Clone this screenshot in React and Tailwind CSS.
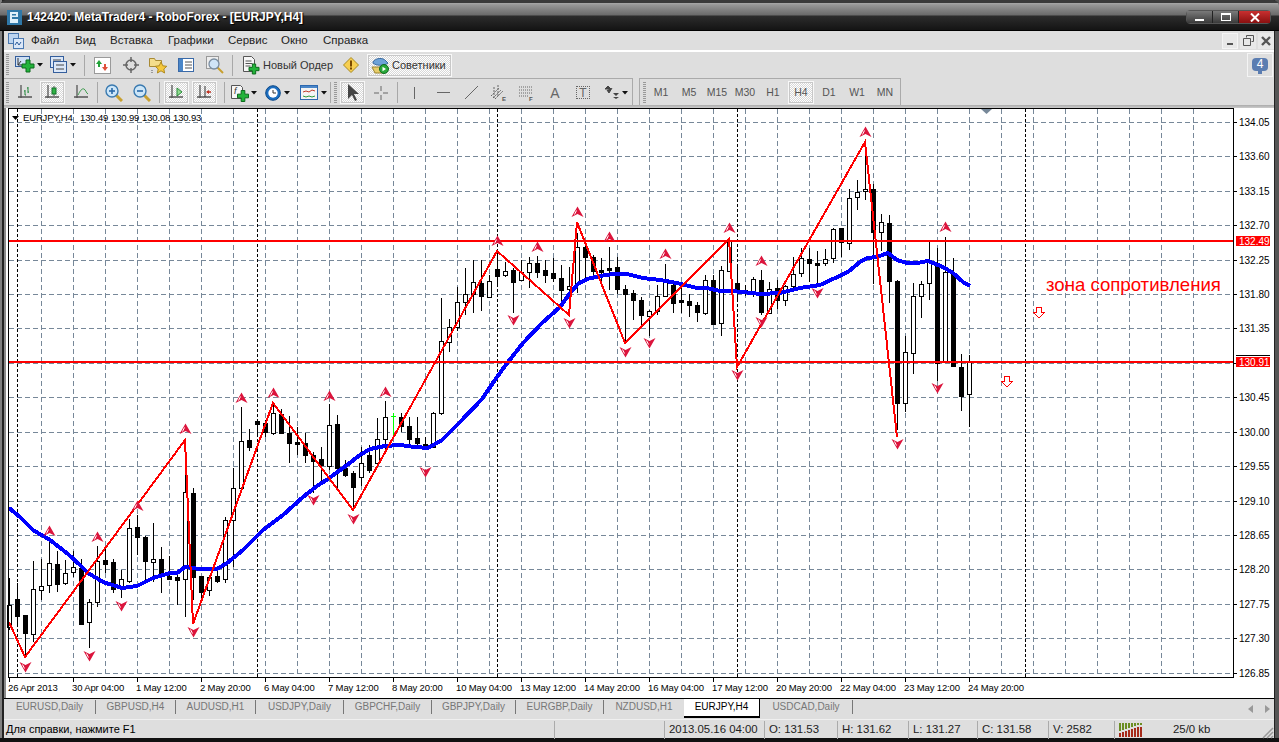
import React from "react";

// [high, bodyTop, bodyBottom, low, black]
const candles = [
  [578,605,627,630,0],[583,599,616,625,1],[615,615,633,657,1],[561,589,634,642,0],[559,586,590,600,0],[540,563,585,593,0],
  [551,564,584,592,1],[560,573,583,585,0],[551,567,572,577,0],[559,568,624,625,1],[599,602,622,648,0],[546,561,602,607,0],
  [548,560,564,573,1],[559,562,589,593,1],[570,579,588,598,0],[519,528,581,583,0],[515,527,537,555,1],[536,537,561,580,1],
  [523,559,562,582,0],[547,559,575,593,1],[556,576,579,580,1],[573,577,580,605,1],[463,492,579,617,0],[488,493,577,600,1],
  [576,576,592,600,1],[575,577,590,596,0],[570,576,581,583,1],[517,520,579,583,0],[468,488,520,567,0],[407,441,488,490,0],
  [429,440,447,451,1],[420,421,424,437,1],[420,423,432,437,1],[403,413,433,435,0],[409,414,433,434,1],[416,433,443,463,1],
  [427,442,444,455,1],[433,443,455,463,1],[452,455,461,493,1],[447,459,465,483,1],[404,425,466,470,0],[415,424,468,488,1],
  [460,468,475,477,1],[471,473,487,510,1],[447,463,477,486,0],[445,455,470,473,1],[418,439,463,466,0],[401,417,439,450,0],
  [413,416,416,437,2],[413,417,426,432,1],[417,426,439,447,1],[417,438,443,448,1],[437,444,447,450,1],[412,413,447,448,0],
  [298,341,413,415,0],[319,327,342,352,0],[287,302,327,331,0],[268,294,302,315,0],[260,282,294,313,0],[260,283,296,311,1],
  [275,281,297,298,0],[250,269,276,286,1],[262,271,275,277,0],[268,270,282,313,1],[260,272,280,281,0],[257,263,272,288,0],
  [256,263,272,278,1],[260,270,275,283,1],[258,273,278,282,1],[265,278,290,305,1],[267,286,289,315,0],[233,247,283,293,0],
  [240,247,257,278,1],[255,257,271,275,1],[258,270,272,283,1],[247,268,270,290,1],[257,267,289,294,1],[285,289,294,342,1],
  [290,293,300,320,1],[297,300,315,325,1],[310,311,316,336,0],[285,296,311,315,0],[264,282,296,297,0],[280,285,303,313,1],
  [287,300,302,313,1],[294,301,305,317,1],[302,305,312,322,1],[275,280,313,315,0],[275,280,324,324,1],[266,270,323,336,0],
  [239,240,271,272,0],[265,283,290,300,1],[285,290,293,296,1],[277,279,292,297,0],[270,280,312,315,1],[282,289,313,314,0],
  [280,288,300,309,1],[285,286,300,306,0],[257,274,286,288,0],[248,258,273,277,0],[248,259,263,282,1],[251,263,265,285,1],
  [249,259,263,266,0],[228,229,258,263,0],[228,228,242,257,1],[189,198,243,250,0],[180,192,197,210,0],[142,189,191,200,0],
  [184,189,232,284,1],[214,222,232,251,0],[215,223,281,303,1],[280,281,403,430,1],[336,352,403,412,0],[283,296,353,374,0],
  [281,284,296,318,0],[242,262,283,300,0],[248,263,363,381,1],[237,272,362,363,0],[258,273,366,367,1],[354,367,396,411,1],
  [355,362,394,427,0],
];

const maPoints = "9,508 20,517 33,530 50,540 68,554 80,565 88,573 103,582 122,588 137,586 153,578 170,573 177,573 185,567 200,569 217,569 227,563 243,550 263,530 283,515 303,497 317,486 328,479 347,465 360,455 370,449 385,446 400,445 415,447 428,448 442,440 460,422 482,399 497,377 508,362 523,343 542,323 560,307 570,293 578,284 587,279 600,276 613,274 627,274 643,278 660,280 677,283 697,288 707,288 720,291 730,291 743,292 760,294 780,293 800,288 820,285 833,279 848,272 860,262 867,258 877,257 888,253 897,260 907,263 917,263 928,261 943,267 953,273 963,282 970,286";
const zigzag = "9,622 25,657 185,440 193,624 273,403 353,510 497,251 569,315 577,222 625,343 729,239 737,367 865,142 897,437";

const upMarks = [[49,531],[97,537],[137,506],[185,429],[241,398],[273,393],[329,396],[385,392],[497,241],[537,247],[577,212],[609,237],[665,254],[729,228],[761,261],[865,132],[945,227]];
const downMarks = [[25,667],[89,656],[121,606],[193,632],[313,500],[353,519],[425,472],[513,320],[569,323],[625,352],[649,343],[737,375],[761,322],[817,293],[897,444],[937,388]];

const gridY = [122,156,191,225,260,294,328,363,397,432,466,501,535,569,604,638,673];
const gridX = Array.from({ length: 37 }, (_, i) => 41 + 32 * i);
const prices = ["134.05","133.60","133.15","132.70","132.25","131.80","131.35","","130.45","130.00","129.55","129.10","128.65","128.20","127.75","127.30","126.85"];
const times = ["26 Apr 2013","30 Apr 04:00","1 May 12:00","2 May 20:00","6 May 04:00","7 May 12:00","8 May 20:00","10 May 04:00","13 May 12:00","14 May 20:00","16 May 04:00","17 May 12:00","20 May 20:00","22 May 04:00","23 May 12:00","24 May 20:00"];

const Chart = () => (
  <svg viewBox="4 108 1270 590" width="1270" height="590" className="block shrink-0 bg-white">
    <rect x="4" y="108" width="2" height="590" fill="#8a8a8a" />
    <g stroke="#778899" strokeDasharray="5 3" shapeRendering="crispEdges">
      {gridX.map((x) => <line key={x} x1={x + 0.5} y1="109" x2={x + 0.5} y2="677" />)}
      {gridY.map((y) => <line key={y} x1="9" y1={y + 0.5} x2="1233" y2={y + 0.5} />)}
    </g>
    <g stroke="#000" strokeDasharray="3 2" shapeRendering="crispEdges">
      {[17, 257, 497, 737, 1025].map((x) => <line key={x} x1={x + 0.5} y1="109" x2={x + 0.5} y2="677" />)}
    </g>
    <g shapeRendering="crispEdges">
      {candles.map((c, i) => {
        const x = 9 + 8 * i;
        if (c[4] === 2) {
          return (
            <g key={i} stroke="#00ff00">
              <line x1={x + 0.5} y1={c[0]} x2={x + 0.5} y2={c[3]} />
              <line x1={x - 2} y1={c[1] + 0.5} x2={x + 3} y2={c[1] + 0.5} />
            </g>
          );
        }
        return (
          <g key={i} stroke="#000">
            <line x1={x + 0.5} y1={c[0]} x2={x + 0.5} y2={c[3]} />
            <rect x={x - 1.5} y={c[1] + 0.5} width="4" height={c[2] - c[1]} fill={c[4] ? "#000" : "#fff"} />
          </g>
        );
      })}
    </g>
    <polyline points={maPoints} fill="none" stroke="#0000ff" strokeWidth="4" shapeRendering="crispEdges" />
    <polyline points={zigzag} fill="none" stroke="#ff0000" strokeWidth="2" shapeRendering="crispEdges" />
    <g fill="#ff0000" shapeRendering="crispEdges">
      <rect x="9" y="240" width="1224" height="2" />
      <rect x="9" y="361" width="1224" height="2" />
    </g>
    <g>
      {upMarks.map(([x, y]) => (
        <g key={`u${x}`}>
          <path d={`M${x + 0.5} ${y - 5.5}L${x + 6.5} ${y + 5}L${x + 0.5} ${y + 2}L${x - 5.5} ${y + 5}Z`} fill="#dc143c" />
          <path d={`M${x - 0.5} ${y - 1.5}L${x - 2.5} ${y + 2.5}`} stroke="#fff" strokeWidth="1" />
        </g>
      ))}
      {downMarks.map(([x, y]) => (
        <g key={`d${x}`}>
          <path d={`M${x + 0.5} ${y + 5.5}L${x + 6.5} ${y - 5}L${x + 0.5} ${y - 2}L${x - 5.5} ${y - 5}Z`} fill="#dc143c" />
          <path d={`M${x - 0.5} ${y + 1.5}L${x - 2.5} ${y - 2.5}`} stroke="#fff" strokeWidth="1" />
        </g>
      ))}
    </g>
    <g fill="#fff" stroke="#ff0000" shapeRendering="crispEdges">
      <path d="M1004.5 376.5h5v5h3l-5.5 5.5l-5.5 -5.5h3z" />
      <path d="M1036.5 307.5h5v5h3l-5.5 5.5l-5.5 -5.5h3z" />
    </g>
    <polygon points="981,109 992,109 986.5,114" fill="#778899" />
    <rect x="8" y="108" width="1225" height="569" fill="none" stroke="#000" shapeRendering="crispEdges" transform="translate(0.5 0.5)" />
    <g stroke="#000" shapeRendering="crispEdges">
      {gridY.map((y) => <line key={y} x1="1234" y1={y + 0.5} x2="1237" y2={y + 0.5} />)}
      {times.map((t, i) => <line key={t} x1={9.5 + 64 * i} y1="678" x2={9.5 + 64 * i} y2="682" />)}
    </g>
    <g fontSize="10" fill="#000">
      {prices.map((p, i) => p && <text key={p} x="1239" y={gridY[i] + 3.5}>{p}</text>)}
      <polygon points="12,116 19,116 15.5,120" fill="#000" />
    </g>
    <g fontSize="9.5" letterSpacing="-0.15" fill="#000">
      <text x="23" y="121">EURJPY,H4</text>
      <text x="80" y="121">130.49</text>
      <text x="111" y="121">130.99</text>
      <text x="142" y="121">130.08</text>
      <text x="173" y="121">130.93</text>
      {times.map((t, i) => <text key={t} x={8 + 64 * i} y="690.5">{t}</text>)}
    </g>
    <rect x="1236" y="236" width="34" height="10" fill="#ff0000" />
    <rect x="1236" y="355" width="34" height="1" fill="#000" />
    <rect x="1236" y="357" width="34" height="10" fill="#ff0000" />
    <text x="1239" y="245" fontSize="10" fill="#fff">132.49</text>
    <text x="1239" y="366" fontSize="10" fill="#fff">130.91</text>
    <text x="1046" y="291" fontSize="18.6" fill="#ff0000">зона сопротивления</text>
  </svg>
);

const Arrow = ({ className }) => (
  <svg viewBox="0 0 6 4" width="6" height="4" className={`shrink-0 ${className}`}><path d="M0 0h6L3 3.5z" fill="#111" /></svg>
);

const Grip = ({ className }) => (
  <div className={`w-[3px] h-[22px] shrink-0 bg-[repeating-linear-gradient(to_bottom,#999_0,#999_1px,transparent_1px,transparent_2px)] ${className}`} />
);

const Sep = ({ className }) => <div className={`w-px h-[21px] shrink-0 bg-[#a8a8a8] ${className}`} />;

const Pressed = ({ className, children }) => (
  <div className={`h-[23px] shrink-0 flex items-center justify-center border border-[#f8f8f8] outline outline-[#c8c8c8] -outline-offset-2 bg-[repeating-conic-gradient(#ffffff_0_25%,#d8d8d8_0_50%)] bg-[length:2px_2px] ${className}`}>
    {children}
  </div>
);

const Plus = ({ x, y, s = 5 }) => (
  <path d={`M${x - s / 3} ${y - s}h${(2 * s) / 3}v${s - s / 3}h${s - s / 3}v${(2 * s) / 3}h-${s - s / 3}v${s - s / 3}h-${(2 * s) / 3}v-${s - s / 3}h-${s - s / 3}v-${(2 * s) / 3}h${s - s / 3}z`} fill="#22b33a" stroke="#0c6b1c" strokeWidth="1" />
);

const NewChartIcon = () => (
  <svg viewBox="0 0 21 18" width="21" height="18" className="shrink-0">
    <rect x="0.5" y="0.5" width="14" height="10" fill="#cfe0f5" stroke="#345e9c" />
    <path d="M3 2v7h9M3 9l3-4" fill="none" stroke="#333" />
    <Plus x={13} y={10} s={6} />
  </svg>
);

const ProfilesIcon = () => (
  <svg viewBox="0 0 17 18" width="17" height="18" className="shrink-0">
    <rect x="0.5" y="0.5" width="13" height="11" fill="#dbe7f7" stroke="#345e9c" />
    <rect x="3.5" y="5.5" width="13" height="11" fill="#dbe7f7" stroke="#345e9c" />
    <path d="M3 4h8M6 9h8M6 13h8" stroke="#444" />
  </svg>
);

const MarketIcon = () => (
  <svg viewBox="0 0 17 17" width="17" height="17" className="shrink-0">
    <rect x="0.5" y="0.5" width="16" height="16" fill="#fff" stroke="#9a9a9a" />
    <path d="M5 3L2 7h2v3h2V7h2z" fill="#22a33a" />
    <path d="M11 14l3-4h-2V7h-2v3H8z" fill="#e0503a" />
  </svg>
);

const CrossIcon = () => (
  <svg viewBox="0 0 16 16" width="16" height="16" className="shrink-0" fill="none" stroke="#666">
    <circle cx="8" cy="8" r="5" strokeWidth="1.5" />
    <path d="M8 0v5M8 11v5M0 8h5M11 8h5" strokeWidth="1.5" />
  </svg>
);

const FolderStarIcon = () => (
  <svg viewBox="0 0 18 18" width="18" height="18" className="shrink-0">
    <path d="M0.5 2.5h5l1 2h6v6h-12z" fill="#f4dd8c" stroke="#a88a35" />
    <path d="M12 6l1.8 3.8 4 .5-3 2.7.8 4L12 14.8 8.4 17l.8-4-3-2.7 4-.5z" fill="#f6c93e" stroke="#b08a1e" />
    <path d="M3 14v3" stroke="#555" strokeDasharray="1 1" />
  </svg>
);

const ListIcon = () => (
  <svg viewBox="0 0 16 16" width="16" height="16" className="shrink-0">
    <rect x="0.5" y="1.5" width="15" height="13" fill="#fff" stroke="#3a6aa8" />
    <rect x="1" y="2" width="4" height="12" fill="#4a86c8" />
    <path d="M7 5h7M7 8h7M7 11h7" stroke="#555" />
  </svg>
);

const MagChartIcon = () => (
  <svg viewBox="0 0 18 18" width="18" height="18" className="shrink-0">
    <rect x="0.5" y="0.5" width="12" height="12" fill="#eee" stroke="#999" />
    <circle cx="8" cy="8" r="5" fill="#cfe4f7" stroke="#7a8da0" strokeWidth="1.3" />
    <path d="M12 12l5 5" stroke="#c8a030" strokeWidth="2" />
  </svg>
);

const OrderIcon = () => (
  <svg viewBox="0 0 17 19" width="17" height="19" className="shrink-0">
    <path d="M0.5 0.5h8l3 3v12h-11z" fill="#f6f6f6" stroke="#555" />
    <path d="M2.5 5h6M2.5 7.5h7M2.5 10h5" stroke="#555" />
    <Plus x={11} y={13} s={5} />
  </svg>
);

const WarnIcon = () => (
  <svg viewBox="0 0 16 16" width="16" height="16" className="shrink-0">
    <path d="M8 0.5L15.5 8L8 15.5L0.5 8z" fill="#f7cf52" stroke="#a88a20" />
    <rect x="7" y="3.5" width="2" height="6" fill="#7a4a00" />
    <rect x="7" y="10.5" width="2" height="2" fill="#7a4a00" />
  </svg>
);

const ExpertIcon = () => (
  <svg viewBox="0 0 18 17" width="18" height="17" className="shrink-0">
    <path d="M1 10l3 6h8l2-6z" fill="#e8cd6a" stroke="#9a8430" />
    <path d="M2 5c2-4 10-5 13-1l2 2c-3 3-12 3-15 0z" fill="#6ea3d8" stroke="#3a6aa0" />
    <circle cx="13" cy="12" r="4.5" fill="#2aa83a" stroke="#0f6a20" />
    <path d="M11.5 9.8v4.4l3.5-2.2z" fill="#fff" />
  </svg>
);

const AxisIcon = ({ children }) => (
  <svg viewBox="0 0 15 15" width="15" height="15" className="shrink-0" fill="none">
    <path d="M3 0v13M0 12h14" stroke="#555" strokeWidth="1.3" />
    {children}
  </svg>
);

const ZoomIcon = ({ plus }) => (
  <svg viewBox="0 0 18 18" width="18" height="18" className="shrink-0">
    <path d="M11 11l6 6" stroke="#c8a030" strokeWidth="3" />
    <circle cx="7" cy="7" r="6" fill="#cde6f8" stroke="#3a7ab0" strokeWidth="1.4" />
    <path d="M4 7h6" stroke="#2a6aa8" strokeWidth="1.6" />
    {plus && <path d="M7 4v6" stroke="#2a6aa8" strokeWidth="1.6" />}
  </svg>
);

const IndicatorIcon = () => (
  <svg viewBox="0 0 19 19" width="19" height="19" className="shrink-0">
    <path d="M0.5 2.5h9l2 2v11h-11z" fill="#f6f6f6" stroke="#555" />
    <text x="3" y="11" fontSize="9" fontStyle="italic" fill="#333">f</text>
    <Plus x={12} y={13} s={5.5} />
  </svg>
);

const ClockIcon = () => (
  <svg viewBox="0 0 16 16" width="16" height="16" className="shrink-0">
    <circle cx="8" cy="8" r="7.3" fill="#1c6ec0" stroke="#0e4a88" />
    <circle cx="8" cy="8" r="4.7" fill="#fff" />
    <path d="M8 5v3h3" fill="none" stroke="#333" />
  </svg>
);

const TemplateIcon = () => (
  <svg viewBox="0 0 18 15" width="18" height="15" className="shrink-0">
    <rect x="0.5" y="0.5" width="17" height="14" fill="#f4f4f4" stroke="#2c68b0" />
    <rect x="1" y="1" width="16" height="2" fill="#4a86c8" />
    <path d="M3 7l3-1 3 1 3-2 3 1" fill="none" stroke="#c03a2a" />
    <path d="M3 11l3 1 3-1 3 1 3-1" fill="none" stroke="#2a9a3a" />
  </svg>
);

const menu = [
  ["Файл", "ml-[7px] w-[44px]"],
  ["Вид", "w-[35px]"],
  ["Вставка", "w-[58px]"],
  ["Графики", "w-[60px]"],
  ["Сервис", "w-[53px]"],
  ["Окно", "w-[42px]"],
  ["Справка", "w-[60px]"],
];

const frames = ["M1", "M5", "M15", "M30", "H1", "H4", "D1", "W1", "MN"];

const tabs = [
  ["EURUSD,Daily", "w-[92px] border-r"],
  ["GBPUSD,H4", "w-[80px] border-r"],
  ["AUDUSD,H1", "w-[80px] border-r"],
  ["USDJPY,Daily", "w-[88px] border-r"],
  ["GBPCHF,Daily", "w-[88px] border-r"],
  ["GBPJPY,Daily", "w-[84px] border-r"],
  ["EURGBP,Daily", "w-[88px] border-r"],
  ["NZDUSD,H1", "w-[80px]"],
];

const status = [
  ["2013.05.16 04:00", "w-[100px]"],
  ["O: 131.53", "w-[73px]"],
  ["H: 131.62", "w-[71px]"],
  ["L: 131.27", "w-[69px]"],
  ["C: 131.58", "w-[71px]"],
  ["V: 2582", "w-[66px]"],
];

export default function App() {
  return (
    <div className="w-[1279px] h-[742px] overflow-hidden flex flex-col bg-[linear-gradient(to_right,#808080_0,#808080_2px,#222_2px,#222_1275px,#555_1275px)] font-['Liberation_Sans',sans-serif] text-[11px] leading-none">
      {/* title bar */}
      <div className="h-[31px] shrink-0 flex items-center pt-[3px] rounded-t-md bg-[linear-gradient(to_bottom,#3a3a3a_0,#3a3a3a_3px,#a8a8a8_3px,#969696_5px,#6a6a6a_15px,#2c2c2c_16px,#141414_30px,#000_30px)]">
        <svg viewBox="0 0 15 15" width="15" height="15" className="ml-[7px] shrink-0">
          <rect width="15" height="15" fill="#2f78a8" />
          <path d="M3 2h8v5H5v2h6v4H3z" fill="#dff0fa" />
          <rect x="5" y="4" width="4" height="1.5" fill="#2f78a8" />
        </svg>
        <span className="ml-[5px] font-bold text-[12px] text-white [text-shadow:1px_1px_1px_#000]">142420: MetaTrader4 - RoboForex - [EURJPY,H4]</span>
        <div className="ml-auto mr-[8px] flex h-[14px] border border-[#555] rounded-sm">
          <div className="w-[26px] bg-[linear-gradient(to_bottom,#7a7a7a,#3a3a3a)] border-r border-[#222] flex items-end justify-center pb-[2px]">
            <div className="w-[9px] h-[2px] bg-white" />
          </div>
          <div className="w-[26px] bg-[linear-gradient(to_bottom,#7a7a7a,#3a3a3a)] border-r border-[#222] flex items-center justify-center">
            <div className="w-[10px] h-[8px] border border-t-2 border-white" />
          </div>
          <div className="w-[31px] bg-[linear-gradient(to_bottom,#c83030,#8a1010)] flex items-center justify-center">
            <svg viewBox="0 0 10 9" width="10" height="9"><path d="M1 0.5l8 8M9 0.5l-8 8" stroke="#fff" strokeWidth="2" /></svg>
          </div>
        </div>
      </div>

      <div className="flex-1 min-h-0 ml-[4px] mr-[5px] flex flex-col bg-[#dedede]">
        {/* menu */}
        <div className="h-[19px] shrink-0 flex items-center text-[#222] text-[11.5px]">
          <svg viewBox="0 0 16 16" width="16" height="16" className="ml-[4px] shrink-0">
            <rect x="0.5" y="0.5" width="10" height="10" fill="#bcd4f0" stroke="#4a78b0" />
            <rect x="5.5" y="5.5" width="10" height="10" fill="#dbe7f7" stroke="#4a78b0" />
            <path d="M7 12l2-3 2 3 2-3" fill="none" stroke="#2a5a9a" />
          </svg>
          {menu.map(([label, cls]) => <span key={label} className={cls}>{label}</span>)}
          <div className="ml-auto flex gap-[2px]">
            <div className="w-[16px] h-[16px] bg-[#e8e8e8] border border-[#f4f4f4] flex items-end justify-center pb-[3px]"><div className="w-[6px] h-[2px] bg-[#555]" /></div>
            <svg viewBox="0 0 16 16" width="16" height="16" className="bg-[#e8e8e8]"><path d="M6.5 4.5V2.5h7v6h-2M3.5 5.5h7v7h-7z" fill="none" stroke="#555" /></svg>
            <svg viewBox="0 0 16 16" width="16" height="16" className="bg-[#e8e8e8]"><path d="M4 4l8 8M12 4l-8 8" stroke="#555" strokeWidth="2.4" /></svg>
          </div>
        </div>
        <div className="h-[2px] shrink-0 bg-white" />

        {/* toolbar 1 */}
        <div className="h-[26px] shrink-0 flex items-center text-[#333] text-[11px]">
          <Grip className="ml-[2px]" />
          <div className="ml-[6px]"><NewChartIcon /></div>
          <Arrow className="ml-[1px]" />
          <div className="ml-[7px]"><ProfilesIcon /></div>
          <Arrow className="ml-[3px]" />
          <Sep className="ml-[8px]" />
          <div className="ml-[9px]"><MarketIcon /></div>
          <div className="ml-[12px]"><CrossIcon /></div>
          <div className="ml-[10px]"><FolderStarIcon /></div>
          <div className="ml-[11px]"><ListIcon /></div>
          <div className="ml-[12px]"><MagChartIcon /></div>
          <Sep className="ml-[8px]" />
          <div className="ml-[10px]"><OrderIcon /></div>
          <span className="ml-[3px] w-[70px] whitespace-nowrap">Новый Ордер</span>
          <div className="ml-[10px]"><WarnIcon /></div>
          <Pressed className="ml-[8px] w-[85px] !justify-start pl-[3px] gap-[3px]">
            <ExpertIcon />
            <span>Советники</span>
          </Pressed>
          <div className="ml-auto mr-[1px] w-[26px] h-[24px] border border-[#f4f4f4] flex items-center justify-center">
            <div className="relative w-[16px] h-[13px] bg-[#5b7db1] rounded-sm flex items-center justify-center text-white text-[12px] mb-[2px]">
              4
              <div className="absolute left-[6px] -bottom-[3px] w-[4px] h-[3px] bg-[#5b7db1]" />
            </div>
          </div>
        </div>

        {/* toolbar 2 */}
        <div className="h-[27px] shrink-0 flex">
          <div className="w-[629px] flex items-center pt-px border-t border-r border-[#aaa]">
            <Grip className="ml-[2px]" />
            <div className="ml-[9px]"><AxisIcon><path d="M7 5v5M7 6h-1M7 10h1M10 2v6M10 3h-1M10 7h1" stroke="#22863a" /></AxisIcon></div>
            <Pressed className="ml-[7px] w-[25px]">
              <AxisIcon><path d="M9 1v10" stroke="#555" /><rect x="7" y="3" width="4" height="6" fill="#2fb344" stroke="#14702a" /></AxisIcon>
            </Pressed>
            <div className="ml-[9px]"><AxisIcon><path d="M4 10c2-4 4-7 6-6s2 4 4 5" stroke="#3a9a4a" /></AxisIcon></div>
            <Sep className="ml-[8px]" />
            <div className="ml-[7px]"><ZoomIcon plus /></div>
            <div className="ml-[10px]"><ZoomIcon /></div>
            <Sep className="ml-[8px]" />
            <Pressed className="ml-[4px] w-[25px]">
              <AxisIcon><path d="M8 3l5 4-5 4z" fill="#8fdc8f" stroke="#2a8a3a" /></AxisIcon>
            </Pressed>
            <Pressed className="ml-[3px] w-[25px]">
              <AxisIcon><path d="M8 1v11" stroke="#333" /><path d="M14 7H10" stroke="#c03020" strokeWidth="1.5" /><path d="M9 7l3-2v4z" fill="#c03020" /></AxisIcon>
            </Pressed>
            <Sep className="ml-[7px]" />
            <div className="ml-[6px]"><IndicatorIcon /></div>
            <Arrow className="ml-[1px]" />
            <div className="ml-[8px]"><ClockIcon /></div>
            <Arrow className="ml-[3px]" />
            <div className="ml-[10px]"><TemplateIcon /></div>
            <Arrow className="ml-[3px]" />
            <Sep className="ml-[3px]" />
            <Grip className="ml-[3px]" />
            <Pressed className="ml-[3px] w-[25px]">
              <svg viewBox="0 0 12 18" width="12" height="18"><path d="M1 0v15l4-4 3 6 2-1-3-6h5z" fill="#444" /></svg>
            </Pressed>
            <svg viewBox="0 0 16 16" width="16" height="16" className="ml-[8px] shrink-0"><path d="M8 1v5M8 10v5M1 8h5M10 8h5" stroke="#666" /></svg>
            <Sep className="ml-[8px]" />
            <div className="ml-[16px] w-px h-[12px] bg-[#666] shrink-0" />
            <div className="ml-[22px] w-[13px] h-px bg-[#666] shrink-0" />
            <svg viewBox="0 0 13 13" width="13" height="13" className="ml-[15px] shrink-0"><path d="M0 13L13 0" stroke="#666" /></svg>
            <svg viewBox="0 0 17 17" width="17" height="17" className="ml-[12px] shrink-0">
              <path d="M1 12l8-8M3 14l8-8M5 15l8-8M4 3v11M8 1v11" stroke="#666" strokeDasharray="2 1" />
              <text x="12" y="16.5" fontSize="6" fontWeight="bold" fill="#555">E</text>
            </svg>
            <svg viewBox="0 0 15 16" width="15" height="16" className="ml-[12px] shrink-0">
              <path d="M0 2h14M0 5h14M0 8h14M0 11h9" stroke="#666" strokeDasharray="1 1" />
              <text x="10" y="15.5" fontSize="6" fontWeight="bold" fill="#555">F</text>
            </svg>
            <span className="ml-[16px] w-[10px] text-[14px] text-[#666] text-center">A</span>
            <div className="ml-[16px] w-[14px] h-[13px] border border-dotted border-[#666] text-[#666] text-[12px] flex items-center justify-center shrink-0">T</div>
            <svg viewBox="0 0 16 13" width="16" height="13" className="ml-[14px] shrink-0">
              <path d="M4 0L1 3h6zM3 4l2 3 3-5" fill="#444" stroke="#444" />
              <path d="M9 7h6l-3 3zM9 11h6l-3 2z" fill="#444" />
            </svg>
            <Arrow className="ml-[2px]" />
          </div>
          <div className="ml-[6px] w-[262px] flex items-center pt-px border-t border-r border-l border-[#aaa] text-[#555] text-[10.5px]">
            <Grip className="ml-[3px]" />
            <div className="ml-px flex items-center">
              {frames.map((f) => f === "H4" ? (
                <div key={f} className="w-[28px] flex justify-center"><Pressed className="w-[26px]">{f}</Pressed></div>
              ) : (
                <span key={f} className="w-[28px] text-center">{f}</span>
              ))}
            </div>
          </div>
        </div>
        <div className="h-[3px] shrink-0 bg-[linear-gradient(to_bottom,#aaa,#ccc)]" />

        <Chart />

        {/* symbol tabs */}
        <div className="h-[21px] shrink-0 flex items-start border-t border-black bg-[#dedede] text-[#777] text-[10px]">
          <div className="flex mt-px">
            {tabs.map(([label, cls]) => (
              <div key={label} className={`h-[14px] flex items-center justify-center border-[#777] ${cls}`}>{label}</div>
            ))}
          </div>
          <div className="w-[76px] h-[19px] flex items-center justify-center pb-px bg-white text-black border-r border-b-2 border-black">EURJPY,H4</div>
          <div className="w-[93px] h-[14px] mt-px flex items-center justify-center border-r border-[#777]">USDCAD,Daily</div>
          <svg viewBox="0 0 5 8" width="5" height="8" className="ml-[395px] mt-[6px]"><path d="M5 0v8L0 4z" fill="#999" /></svg>
          <svg viewBox="0 0 5 8" width="5" height="8" className="ml-[12px] mt-[6px]"><path d="M0 0v8l5-4z" fill="#999" /></svg>
        </div>

        {/* status bar */}
        <div className="relative h-[20px] shrink-0 flex items-center border-t border-[#f0f0f0] text-[#222] text-[11.4px]">
          <span className="w-[550px] pl-[2px] text-black text-[11px]">Для справки, нажмите F1</span>
          <div className="w-[110px] h-[18px] border-l border-[#aaa]" />
          {status.map(([label, cls]) => (
            <div key={label} className={`h-[18px] flex items-center pl-[4px] border-l border-[#aaa] ${cls}`}>{label}</div>
          ))}
          <div className="h-[18px] flex items-center pl-[4px] border-l border-[#aaa]">
            <svg viewBox="0 0 24 14" width="24" height="14" className="shrink-0">
              <g fill="#6b8e23">
                <rect x="0" y="0" width="2" height="8" /><rect x="3" y="0" width="2" height="7" /><rect x="6" y="0" width="2" height="6" /><rect x="9" y="0" width="2" height="5" />
                <rect x="12" y="0" width="2" height="4" /><rect x="15" y="0" width="2" height="3" /><rect x="18" y="0" width="2" height="2" /><rect x="21" y="0" width="2" height="2" />
              </g>
              <g fill="#a52a1a">
                <rect x="0" y="10" width="2" height="4" /><rect x="3" y="9" width="2" height="5" /><rect x="6" y="8" width="2" height="6" /><rect x="9" y="7" width="2" height="7" />
                <rect x="12" y="6" width="2" height="8" /><rect x="15" y="5" width="2" height="9" /><rect x="18" y="4" width="2" height="10" /><rect x="21" y="4" width="2" height="10" />
              </g>
            </svg>
            <span className="ml-[30px]">25/0 kb</span>
          </div>
          <svg viewBox="0 0 12 12" width="12" height="12" className="absolute right-0 bottom-0"><path d="M11 1L1 11M11 5L5 11M11 9L9 11" stroke="#999" strokeWidth="1.5" /></svg>
        </div>
      </div>
      <div className="h-[4px] shrink-0 bg-[#111]" />
    </div>
  );
}
